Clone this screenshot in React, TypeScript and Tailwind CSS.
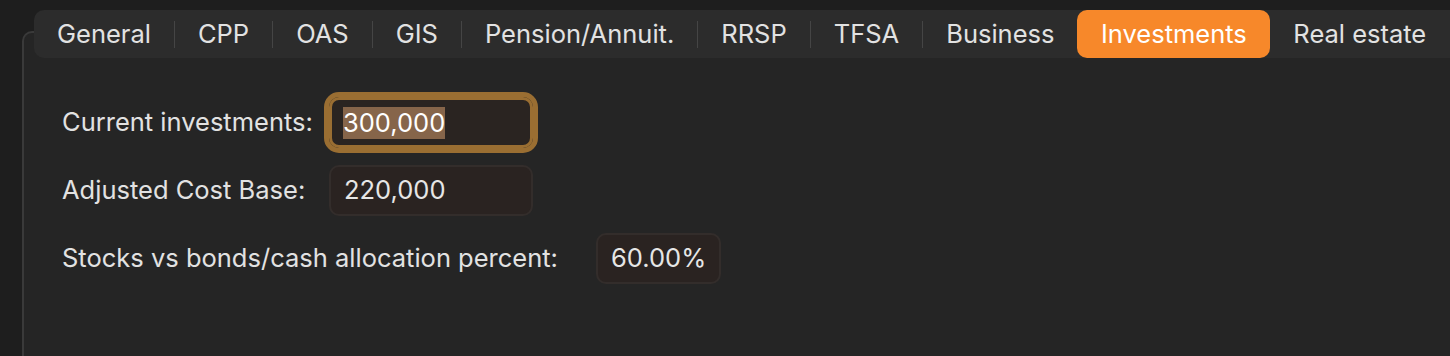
const tabs = [
  "General",
  "CPP",
  "OAS",
  "GIS",
  "Pension/Annuit.",
  "RRSP",
  "TFSA",
  "Business",
  "Investments",
  "Real estate",
];

const active = "Investments";

function TabBar() {
  return (
    <div className="ml-[10px] -mt-[23px] flex h-[48px] items-center whitespace-nowrap rounded-l-[10px] bg-[#2c2c2c]">
      {tabs.map((t, i) => {
        const sel = t === active;
        const prevSel = i > 0 && tabs[i - 1] === active;
        return (
          <div key={t} className="flex h-full shrink-0 items-center">
            {i > 0 && !sel && !prevSel && (
              <div className="h-[27px] w-px bg-[#454545]" />
            )}
            <div
              className={
                sel
                  ? "flex h-full items-center rounded-[10px] bg-[#f7882a] px-[23.5px] text-white"
                  : "flex h-full items-center px-[23px] text-[#e2e2e2]"
              }
            >
              {t}
            </div>
          </div>
        );
      })}
    </div>
  );
}

function Field({ value, focused }: { value: string; focused?: boolean }) {
  if (focused) {
    return (
      <div className="flex h-[51px] w-[204px] items-center rounded-[10px] border-[3px] border-[#9a6e32] bg-[#2a2421] pl-[11px] outline-[5px] outline-solid outline-[#9a6e32]">
        <span className="bg-[#86654a] leading-[32px] text-white">{value}</span>
      </div>
    );
  }
  return (
    <div className="flex h-[51px] items-center rounded-[10px] border-2 border-[#332d2b] bg-[#2a2321] px-[13px] text-[#e6e6e6]">
      {value}
    </div>
  );
}

export default function App() {
  return (
    <div
      className="h-[356px] w-[1450px] overflow-hidden bg-[#1e1e1e] pl-[22px] pt-[31px] text-[25.5px]"
      style={{ fontFamily: "Inter, 'Noto Sans', sans-serif" }}
    >
      <div className="h-[340px] rounded-tl-[10px] border-l-2 border-t-2 border-[#3a3a3a] bg-[#252525]">
        <TabBar />
        <div className="flex flex-col gap-[17px] pl-[38px] pt-[39px] text-[#e2e2e2]">
          <div className="flex items-center">
            <div className="w-[267px] shrink-0">Current investments:</div>
            <Field value="300,000" focused />
          </div>
          <div className="flex items-center">
            <div className="w-[267px] shrink-0">Adjusted Cost Base:</div>
            <div className="w-[204px]">
              <Field value="220,000" />
            </div>
          </div>
          <div className="flex items-center">
            <div className="w-[534px] shrink-0">
              Stocks vs bonds/cash allocation percent:
            </div>
            <Field value="60.00%" />
          </div>
        </div>
      </div>
    </div>
  );
}
